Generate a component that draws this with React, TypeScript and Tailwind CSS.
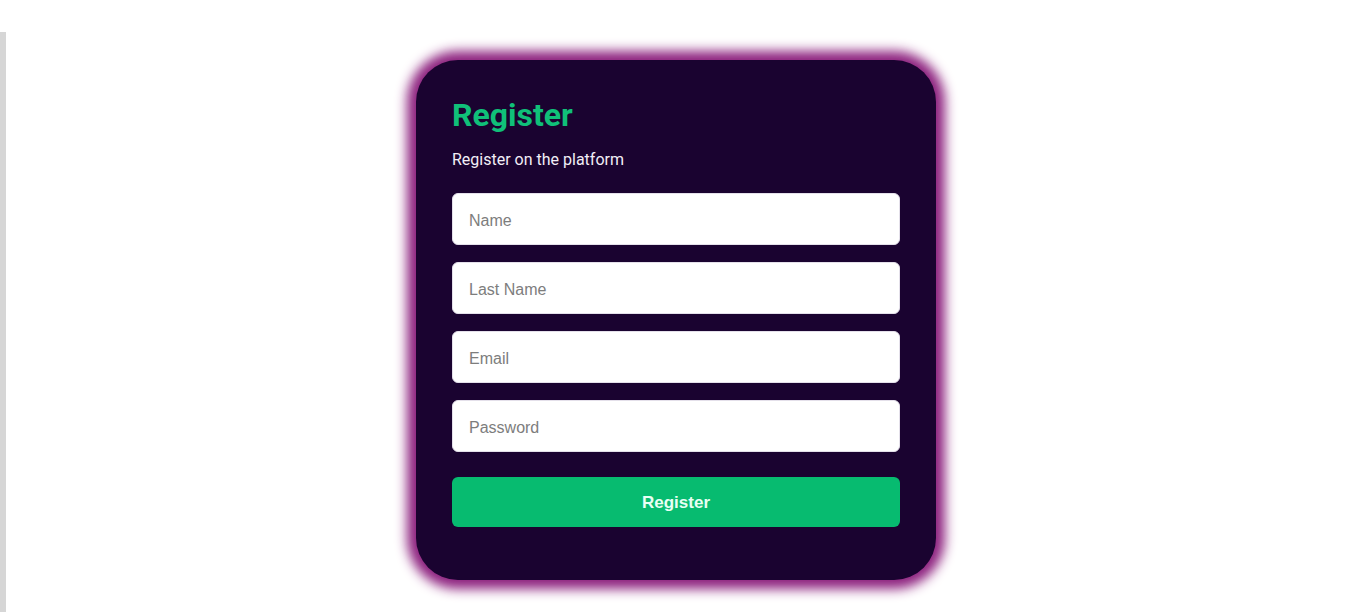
import { useState } from 'react';

const fields = [
  { name: 'name', placeholder: 'Name', type: 'text' },
  { name: 'lastName', placeholder: 'Last Name', type: 'text' },
  { name: 'email', placeholder: 'Email', type: 'email' },
  { name: 'password', placeholder: 'Password', type: 'password' },
];

export default function App() {
  const [values, setValues] = useState<Record<string, string>>({});

  return (
    <div className="flex h-[612px] w-full overflow-hidden bg-white">
      {/* left edge strip */}
      <div className="mt-[32px] w-[6px] shrink-0 bg-[#d6d6d6]" />

      <div className="flex-1 pl-[410px] pt-[60px]">
        <form
          onSubmit={(e) => e.preventDefault()}
          className="flex h-[520px] w-[520px] flex-col rounded-[42px] bg-[#1a0330] px-[36px] pt-[37px] shadow-[0_0_12px_9px_rgba(135,22,120,0.95)]"
        >
          <h1 className="text-[32px] font-bold leading-[36px] text-[#10c079] [font-family:Roboto,sans-serif]">
            Register
          </h1>
          <p className="mt-[15px] text-[16px] leading-[24px] text-[#f2eef6] [font-family:Roboto,sans-serif]">
            Register on the platform
          </p>

          <div className="mt-[21px] flex flex-col gap-[17px]">
            {fields.map((f) => (
              <input
                key={f.name}
                type={f.type}
                placeholder={f.placeholder}
                value={values[f.name] ?? ''}
                onChange={(e) => setValues({ ...values, [f.name]: e.target.value })}
                className="h-[52px] w-full rounded-[6px] border border-[#e4e0ea] bg-white px-[16px] pt-[3px] text-[16px] text-gray-800 outline-none placeholder:text-[#7d7d7d] [font-family:'Liberation_Sans',sans-serif]"
              />
            ))}
          </div>

          <button
            type="submit"
            className="mt-[25px] h-[50px] w-full rounded-[6px] bg-[#07bb70] pt-[2px] text-[17px] font-bold text-[#e8fff4] [font-family:'Liberation_Sans',sans-serif]"
          >
            Register
          </button>
        </form>
      </div>
    </div>
  );
}
